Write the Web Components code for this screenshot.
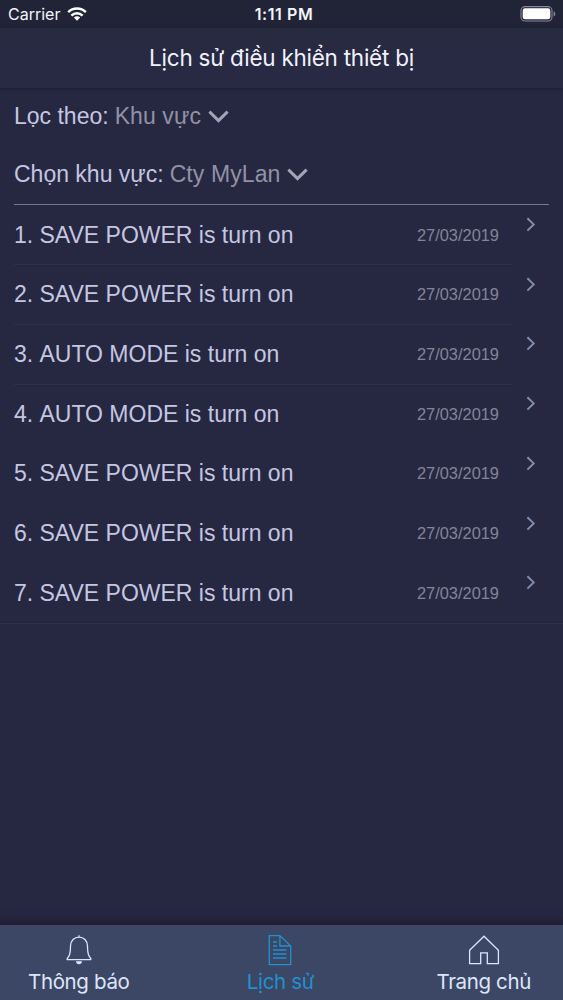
<!DOCTYPE html>
<html lang="vi">
<head>
<meta charset="utf-8">
<title>Lịch sử điều khiển thiết bị</title>
<style>
	body {
		margin: 0;
		background: #262842;
	}
</style>
</head>
<body>
<history-screen></history-screen>

<script>
class StatusBar extends HTMLElement {
	constructor() {
		super();
		this.attachShadow({ mode: 'open' });
		this.shadowRoot.innerHTML = `
			<style>
				:host {
					box-sizing: border-box;
					display: grid;
					grid-template-columns: 1fr auto 1fr;
					align-items: center;
					height: 28px;
					padding: 0 7px 0 8px;
					background: #212437;
					color: #f4f5fc;
					font: 16px/28px Inter, sans-serif;
				}

				.carrier {
					display: flex;
					align-items: center;
					gap: 7px;
				}

				.time {
					margin-left: 4px;
					font-weight: 600;
					letter-spacing: .6px;
				}

				.battery {
					justify-self: end;
				}

				svg {
					display: block;
				}
			</style>
			<div class="carrier">
				<span>Carrier</span>
				<svg width="20" height="14" viewBox="0 0 20 14" fill="none" stroke="#fff" stroke-width="2.5">
					<path d="M1.2 5.2a12.4 12.4 0 0 1 17.6 0M4.4 8.6a7.9 7.9 0 0 1 11.2 0"/>
					<path d="M10 13.8l-3.1-3.2a4.4 4.4 0 0 1 6.2 0z" fill="#fff" stroke="none"/>
				</svg>
			</div>
			<span class="time">1:11 PM</span>
			<svg class="battery" width="36" height="16" viewBox="0 0 36 16">
				<rect x="1" y=".6" width="31" height="14.4" rx="4" fill="none" stroke="#85879a" stroke-width="1.1"/>
				<rect x="2.7" y="2.3" width="27.6" height="11" rx="2.4" fill="#fff"/>
				<path d="M33.6 5.2c2.3.8 2.3 4.4 0 5.2z" fill="#85879a"/>
			</svg>
		`;
	}
}

class NavHeader extends HTMLElement {
	constructor() {
		super();
		this.attachShadow({ mode: 'open' });
		this.shadowRoot.innerHTML = `
			<style>
				:host {
					box-sizing: border-box;
					display: block;
					height: 60px;
					background: linear-gradient(#272b40, #282943 60%);
					box-shadow: 0 1px 3px #191a33;
					color: #f1f2fc;
					font: 22.5px/59px Inter, sans-serif;
					letter-spacing: -.25px;
					text-align: center;
				}
			</style>
			<slot></slot>
		`;
	}
}

class FilterRow extends HTMLElement {
	constructor() {
		super();
		this.attachShadow({ mode: 'open' });
		this.shadowRoot.innerHTML = `
			<style>
				:host {
					display: flex;
					align-items: flex-start;
					height: 58px;
					color: #c5c6e1;
					font: 23px/56px "Liberation Sans", sans-serif;
				}

				.value {
					margin-left: 6px;
					color: #9192a5;
					letter-spacing: .1px;
				}

				svg {
					margin: 22px 0 0 7px;
				}
			</style>
			<span>${this.getAttribute('label')}</span>
			<span class="value"><slot></slot></span>
			<svg width="21" height="13" viewBox="0 0 21 13" fill="none" stroke="#a3a4b6" stroke-width="3">
				<path d="M1.4 1.6l9.1 9 9.1-9"/>
			</svg>
		`;
	}
}

class HistoryItem extends HTMLElement {
	constructor() {
		super();
		this.attachShadow({ mode: 'open' });
		this.shadowRoot.innerHTML = `
			<style>
				:host {
					box-sizing: border-box;
					display: grid;
					grid-template-columns: 25.5px 1fr auto 37px;
					height: 59.7px;
					margin-left: 14px;
					padding-right: 27px;
					background: linear-gradient(#302e4b, #302e4b) left bottom / calc(100% - 50px) 1px no-repeat;
					color: #c5c6e1;
					font: 23px/59px "Liberation Sans", sans-serif;
				}

				:host(:nth-of-type(n + 4)) {
					background: none;
				}

				.date {
					color: #838499;
					font-size: 16.4px;
				}

				svg {
					justify-self: end;
					margin-top: 11.5px;
				}
			</style>
			<span>${this.getAttribute('number')}.</span>
			<span><slot></slot></span>
			<span class="date">${this.getAttribute('date')}</span>
			<svg width="10" height="15" viewBox="0 0 10 15" fill="none" stroke="#818caa" stroke-width="2">
				<path d="M1.4 1.2l6.3 6.2-6.3 6.2"/>
			</svg>
		`;
	}
}

const icons = {
	bell: `<path d="M4.4 24.3C7.8 20.8 7.3 17.5 7.5 12 7.7 6.6 11.2 3.2 16 3.2s8.3 3.4 8.5 8.8c.2 5.5-.3 8.8 3.1 12.3.6.7.4 1.3-.4 1.3H4.8c-.8 0-1-.6-.4-1.3zM16 1.2v2"/>
		<path d="M13 27.2h6c0 4-6 4-6 0z" fill="currentColor" stroke="none"/>`,
	file: `<path d="M5.3 1.6h10.6L26.7 12v18.6H5.3zM15.9 1.6V12h10.8"/>
		<path d="M9 8h4M9 12h4M9 16h13.5M9 20h13.5M9 24h13.5"/>`,
	home: `<path d="M1.6 16.3L16 2.2l14.4 14.1v13.3H19.3V18.8h-6.6v10.8H1.6z"/>`
};

class TabItem extends HTMLElement {
	constructor() {
		super();
		this.attachShadow({ mode: 'open' });
		this.shadowRoot.innerHTML = `
			<style>
				:host {
					display: flex;
					flex-direction: column;
					align-items: center;
					color: #dce6fb;
					font: 20.5px/32px Inter, sans-serif;
					letter-spacing: -.35px;
				}

				:host([active]) {
					margin-right: 5px;
					color: #2191cf;
				}
			</style>
			<svg width="32" height="32" viewBox="0 0 32 32" fill="none" stroke="currentColor" stroke-width="1.3">
				${icons[this.getAttribute('icon')]}
			</svg>
			<slot></slot>
		`;
	}
}

class TabBar extends HTMLElement {
	constructor() {
		super();
		this.attachShadow({ mode: 'open' });
		this.shadowRoot.innerHTML = `
			<style>
				:host {
					box-sizing: border-box;
					display: flex;
					justify-content: space-between;
					height: 75px;
					padding: 9px 32px 0 28px;
					background: #3c4665;
					box-shadow: 0 -2px 7px 3px #211d32;
				}
			</style>
			<slot></slot>
		`;
	}
}

const history = [
	['SAVE POWER is turn on', '27/03/2019'],
	['SAVE POWER is turn on', '27/03/2019'],
	['AUTO MODE is turn on', '27/03/2019'],
	['AUTO MODE is turn on', '27/03/2019'],
	['SAVE POWER is turn on', '27/03/2019'],
	['SAVE POWER is turn on', '27/03/2019'],
	['SAVE POWER is turn on', '27/03/2019']
];

class HistoryScreen extends HTMLElement {
	constructor() {
		super();
		this.attachShadow({ mode: 'open' });
		this.shadowRoot.innerHTML = `
			<style>
				:host {
					display: flex;
					flex-direction: column;
					height: 100vh;
					overflow: hidden;
					background: #262842;
				}

				.filters {
					box-sizing: border-box;
					height: 117px;
					margin: 0 14px;
					border-bottom: 1px solid #77788f;
				}

				.list {
					padding-top: .6px;
					border-bottom: 1px solid #302f4b;
				}

				tab-bar {
					margin-top: auto;
				}
			</style>
			<status-bar></status-bar>
			<nav-header>Lịch sử điều khiển thiết bị</nav-header>
			<div class="filters">
				<filter-row label="Lọc theo:">Khu vực</filter-row>
				<filter-row label="Chọn khu vực:">Cty MyLan</filter-row>
			</div>
			<div class="list">${this.items}</div>
			<tab-bar>
				<tab-item icon="bell">Thông báo</tab-item>
				<tab-item icon="file" active>Lịch sử</tab-item>
				<tab-item icon="home">Trang chủ</tab-item>
			</tab-bar>
		`;
	}

	get items() {
		return history.map(([text, date], i) =>
			`<history-item number="${i + 1}" date="${date}">${text}</history-item>`
		).join('');
	}
}

customElements.define('status-bar', StatusBar);
customElements.define('nav-header', NavHeader);
customElements.define('filter-row', FilterRow);
customElements.define('history-item', HistoryItem);
customElements.define('tab-item', TabItem);
customElements.define('tab-bar', TabBar);
customElements.define('history-screen', HistoryScreen);
</script>
</body>
</html>
